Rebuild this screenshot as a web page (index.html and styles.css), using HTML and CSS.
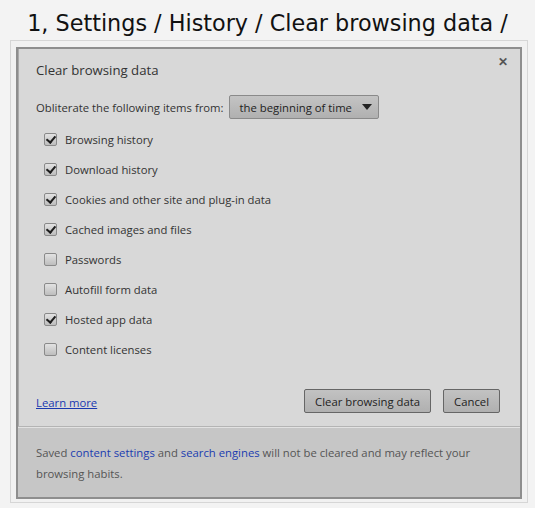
FILE: index.html
```html
<!DOCTYPE html>
<html lang="en">
<head>
  <meta charset="UTF-8">
  <title>Clear browsing data</title>
  <link rel="stylesheet" href="styles.css">
</head>
<body>
  <h1 class="page-title">1, Settings / History / Clear browsing data /</h1>

  <div class="frame">
    <div class="dialog">
      <div class="dialog-header">
        <h2 class="dialog-title">Clear browsing data</h2>
        <span class="dialog-close">&#x2715;</span>
      </div>

      <div class="dialog-body">
        <div class="range-row">
          <span>Obliterate the following items from:</span>
          <span class="select">the beginning of time <span class="select__arrow"></span></span>
        </div>

        <ul class="check-list">
          <li class="check-item"><span class="checkbox checkbox--on"></span>Browsing history</li>
          <li class="check-item"><span class="checkbox checkbox--on"></span>Download history</li>
          <li class="check-item"><span class="checkbox checkbox--on"></span>Cookies and other site and plug-in data</li>
          <li class="check-item"><span class="checkbox checkbox--on"></span>Cached images and files</li>
          <li class="check-item"><span class="checkbox"></span>Passwords</li>
          <li class="check-item"><span class="checkbox"></span>Autofill form data</li>
          <li class="check-item"><span class="checkbox checkbox--on"></span>Hosted app data</li>
          <li class="check-item"><span class="checkbox"></span>Content licenses</li>
        </ul>

        <div class="action-row">
          <a class="learn-more" href="#">Learn more</a>
          <div class="buttons">
            <button class="button">Clear browsing data</button>
            <button class="button">Cancel</button>
          </div>
        </div>
      </div>

      <p class="dialog-footer">Saved <a href="#">content settings</a> and <a href="#">search engines</a> will not be cleared and may reflect your browsing habits.</p>
    </div>
  </div>
</body>
</html>
```

FILE: styles.css
```css
body, html {
  margin: 0;
  background: #f3f3f3;
}

.page-title {
  margin: 0;
  height: 40px;
  line-height: 47px;
  text-align: center;
  font-family: "DejaVu Sans", sans-serif;
  font-size: 22.3px;
  font-weight: normal;
  color: #111;
}

.frame {
  margin: 0 7px 0 10px;
  border: 1px solid #d6d6d6;
  padding: 6px 5px 3px 5px;
  background: #f1f1f1;
}

.dialog {
  border: 2px solid #8e8e8e;
  background: #d8d8d8;
  box-shadow: inset 1px 0 0 #aaa;
  font-family: "Open Sans", sans-serif;
  font-size: 11.3px;
  color: #333;
}

.dialog-header {
  display: flex;
  justify-content: space-between;
  padding: 11px 12px 0 18px;
}

.dialog-title {
  margin: 0;
  font-size: 13.2px;
  font-weight: normal;
  line-height: 20px;
  color: #333;
}

.dialog-close {
  font-size: 12px;
  font-weight: bold;
  color: #555;
  line-height: 20px;
  margin-top: -8px;
}

.dialog-body {
  padding: 0 20px 13px 18px;
}

.range-row {
  display: flex;
  align-items: center;
  gap: 5px;
  margin-top: 15px;
}

.select {
  display: inline-flex;
  align-items: center;
  gap: 10px;
  height: 22px;
  padding: 0 6px 0 10px;
  border: 1px solid #8a8a8a;
  border-radius: 2px;
  background: linear-gradient(#c4c4c4, #b0b0b0);
  color: #222;
}

.select__arrow {
  width: 0;
  height: 0;
  border-left: 5px solid transparent;
  border-right: 5px solid transparent;
  border-top: 6px solid #222;
}

.check-list {
  list-style: none;
  margin: 5px 0 0 0;
  padding: 0 0 0 8px;
}

.check-item {
  display: flex;
  align-items: center;
  height: 30px;
  gap: 8px;
}

.checkbox {
  width: 11px;
  height: 11px;
  border: 1px solid #8a8a8a;
  border-radius: 2px;
  background: linear-gradient(#e2e2e2, #bdbdbd);
  position: relative;
}

.checkbox--on::after {
  content: "";
  position: absolute;
  left: 3px;
  top: 0;
  width: 4px;
  height: 7px;
  border: solid #1e1e1e;
  border-width: 0 2.5px 2.5px 0;
  transform: rotate(40deg);
}

.action-row {
  display: flex;
  justify-content: space-between;
  align-items: center;
  margin-top: 25px;
}

.learn-more {
  color: #1a38b0;
  margin-top: 3px;
}

.buttons {
  display: flex;
  gap: 12px;
}

.button {
  height: 24px;
  padding: 0 10px;
  border: 1px solid #666;
  border-radius: 2px;
  background: linear-gradient(#c2c2c2, #b0b0b0);
  font-family: "Open Sans", sans-serif;
  font-size: 11.3px;
  color: #222;
}

.dialog-footer {
  margin: 0;
  border-top: 1px solid #b4b4b4;
  box-shadow: inset 0 1px 0 #e2e2e2;
  background: #c6c6c6;
  padding: 15px 40px 13px 18px;
  line-height: 21px;
  color: #555;
}

.dialog-footer a {
  color: #1a3cb0;
  text-decoration: none;
}
```
